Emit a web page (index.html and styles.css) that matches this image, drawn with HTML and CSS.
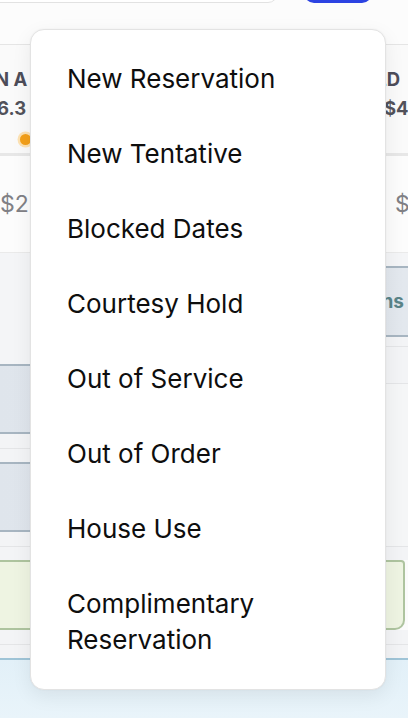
FILE: index.html
```html
<!DOCTYPE html>
<html lang="en">
<head>
<meta charset="utf-8">
<title>New booking menu</title>
<link rel="stylesheet" href="styles.css">
</head>
<body>
<div class="page">
  <div class="topbar">
    <div class="search"></div>
    <div class="btn"></div>
  </div>
  <div class="table">
    <div class="col">
      <div class="hdr">
        <div class="hdr-title title-cut">N A</div>
        <div class="hdr-value value-cut">6.3</div>
        <div class="dot"></div>
      </div>
      <div class="row2"><span class="money">$2</span></div>
      <div class="fill tall"></div>
      <div class="band blue"></div>
      <div class="strip"></div><div class="strip short"></div>
      <div class="band blue"></div>
      <div class="strip"></div><div class="strip short"></div>
      <div class="band green"></div>
      <div class="strip"></div><div class="strip short"></div>
      <div class="sky"></div>
    </div>
    <div class="col">
      <div class="hdr">
        <div class="hdr-title right-end">SOLD</div>
        <div class="hdr-value right-start">$456</div>
      </div>
      <div class="row2 right-money"><span class="money">$3</span></div>
      <div class="fill small"></div>
      <div class="band blue label-band"><span class="band-label">Actions</span></div>
      <div class="strip tiny"></div>
      <div class="strip mid"></div>
      <div class="strip long"></div>
      <div class="strip short"></div>
      <div class="band green rounded"></div>
      <div class="strip"></div><div class="strip short"></div>
      <div class="sky"></div>
    </div>
  </div>

  <div class="menu">
    <div class="item">New Reservation</div>
    <div class="item">New Tentative</div>
    <div class="item">Blocked Dates</div>
    <div class="item">Courtesy Hold</div>
    <div class="item">Out of Service</div>
    <div class="item">Out of Order</div>
    <div class="item">House Use</div>
    <div class="item">Complimentary<br>Reservation</div>
  </div>
</div>
</body>
</html>
```
FILE: styles.css
```css
* { box-sizing: border-box; }
html, body { margin: 0; padding: 0; }
body {
  width: 408px;
  height: 718px;
  overflow: hidden;
  background: #fbfbfb;
  font-family: Inter, "Noto Sans", "Liberation Sans", sans-serif;
}
.page {
  position: relative;
  width: 408px;
  height: 718px;
  overflow: hidden;
  display: flex;
  flex-direction: column;
}

/* top bar */
.topbar {
  height: 44px;
  flex: 0 0 44px;
  display: flex;
  align-items: flex-start;
  background: #fcfcfc;
}
.search {
  width: 290px;
  height: 40px;
  margin-top: -37px;
  margin-left: -12px;
  border: 1px solid #e2e2e2;
  border-radius: 10px;
  background: #fff;
}
.btn {
  width: 68px;
  height: 40px;
  margin-top: -37px;
  margin-left: 26px;
  border-radius: 10px;
  background: #2c43e2;
}

/* table behind */
.table {
  flex: 1;
  display: flex;
  border-top: 1px solid #e5e5e5;
  overflow: hidden;
}
.col {
  width: 204px;
  flex: 0 0 204px;
  display: flex;
  flex-direction: column;
  overflow: hidden;
  white-space: nowrap;
}
.hdr {
  height: 111px;
  flex: 0 0 111px;
  padding-top: 20px;
  border-bottom: 3px solid #e7e7e7;
  background: #fafafa;
  font-size: 18.5px;
  line-height: 29px;
  font-weight: 700;
}
.hdr-title { color: #4d4d59; }
.hdr-value { color: #52525a; }
.title-cut { text-indent: -5px; }
.value-cut { text-indent: -3px; }
.right-end { text-align: right; padding-right: 8px; }
.right-start { padding-left: 180px; }
.dot {
  width: 11px;
  height: 11px;
  margin-top: 11px;
  margin-left: 20px;
  border-radius: 50%;
  background: #f4a019;
  box-shadow: 0 0 0 2.5px #fde2b3;
}
.row2 {
  height: 97px;
  flex: 0 0 97px;
  display: flex;
  align-items: center;
  border-bottom: 1px solid #eaeaea;
  background: #fcfcfc;
}
.money {
  font-size: 23px;
  color: #808085;
}
.right-money { padding-left: 191px; }
.fill { background: #f4f5f7; }
.fill.tall { height: 111px; flex: 0 0 111px; }
.fill.small { height: 13px; flex: 0 0 13px; }
.band {
  height: 70px;
  flex: 0 0 70px;
  border-top: 2px solid #a7b5c1;
  border-bottom: 2px solid #a7b5c1;
}
.band.blue { background: linear-gradient(90deg, #dfe5ec, #e3e8ee); }
.band.green {
  background: #eef4e2;
  border-color: #aec49f;
}
.band.rounded {
  margin-right: 3px;
  border-right: 2px solid #aec49f;
  border-radius: 0 4px 10px 0;
}
.label-band {
  height: 71px;
  flex: 0 0 71px;
  display: flex;
  align-items: center;
  justify-content: flex-end;
  padding-right: 4px;
}
.band-label {
  font-size: 19px;
  font-weight: 700;
  color: #5a8488;
}
.strip {
  height: 15px;
  flex: 0 0 15px;
  background: #f3f4f6;
  border-bottom: 1px solid #e4e5e7;
}
.strip.short { height: 13px; flex: 0 0 13px; border-bottom: 0; }
.strip.tiny { height: 10px; flex: 0 0 10px; }
.strip.mid { height: 37px; flex: 0 0 37px; }
.strip.long { height: 163px; flex: 0 0 163px; background: #f5f6f7; }
.sky {
  flex: 1;
  border-top: 2px solid #9fc4d7;
  background: linear-gradient(180deg, #e2f0f8, #e9f4fa);
}

/* dropdown menu */
.menu {
  position: absolute;
  left: 30px;
  top: 29px;
  width: 356px;
  height: 661px;
  padding: 11.5px 0 8px;
  background: #fff;
  border: 1px solid #e3e3e3;
  border-radius: 14px;
  box-shadow: 0 6px 20px rgba(0, 0, 0, 0.07), 0 0 2px rgba(0, 0, 0, 0.05);
}
.item {
  padding: 19.25px 20px 19.25px 36px;
  font-size: 26px;
  line-height: 36.5px;
  font-weight: 400;
  color: #0e0e0e;
}
```
